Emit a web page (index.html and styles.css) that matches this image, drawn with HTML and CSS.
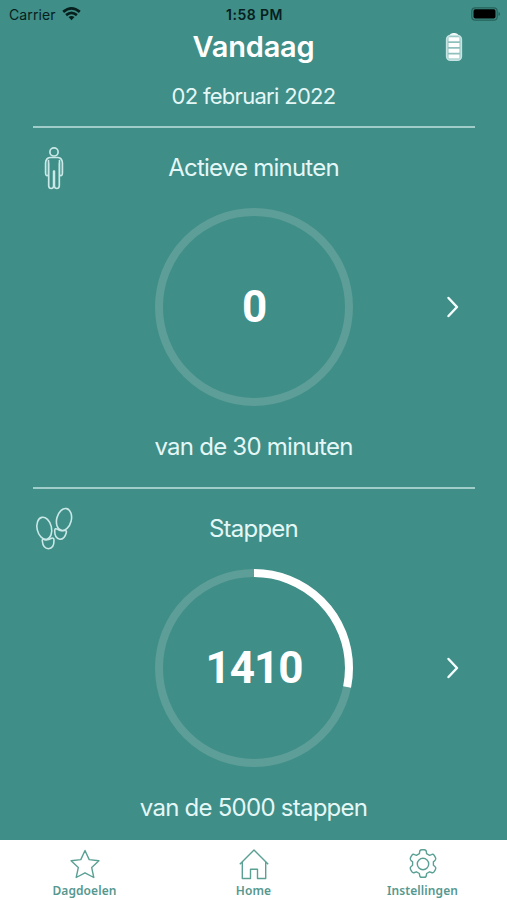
FILE: index.html
```html
<!DOCTYPE html>
<html lang="nl">
<head>
<meta charset="utf-8">
<title>Vandaag</title>
<link rel="stylesheet" href="styles.css">
</head>
<body>
<div class="app">
  <header class="header">
    <div class="status">
      <div class="carrier"><span>Carrier</span>
        <svg class="wifi" width="19" height="14" viewBox="0 0 19 14" fill="none" stroke="#07201e" stroke-width="2.7"><path d="M1.2 4.9Q9.500-2 17.800 4.900M4.100 8.100Q9.500 3.600 14.900 8.100"/><path d="M6.500 10.100Q9.500 7.800 12.500 10.100L9.500 13.200Z" fill="#07201e" stroke="none"/></svg>
      </div>
      <div class="time">1:58 PM</div>
      <svg class="power" width="30" height="14" viewBox="0 0 30 14"><rect x=".8" y=".8" width="25.400" height="12.400" rx="3.500" fill="none" stroke="#27625d" stroke-width="1.200"/><rect x="2.500" y="2.300" width="22" height="9.200" rx="1.800" fill="#000"/><path d="M27.500 5v4q1.600-.7 1.600-2t-1.600-2" fill="#27625d"/></svg>
    </div>
    <div class="title-row">
      <h1>Vandaag</h1>
      <svg class="battery" width="18" height="30" viewBox="0 0 18 30" fill="none"><path d="M4.500 3.500Q5 1 9 1t4.500 2.500" fill="#fff"/><rect x="1.700" y="3.500" width="14.600" height="24.700" rx="3.800" fill="#8fc0bc" stroke="#c5e4e3" stroke-width="1.700"/><path d="M3.500 7.200h11M3.500 13h11M3.500 18.800h11M3.500 24.600h11" stroke="#fff" stroke-width="4"/></svg>
    </div>
    <p class="date">02 februari 2022</p>
  </header>

  <section class="card">
    <div class="card-head">
      <svg class="icon" width="42" height="44" viewBox="0 0 42 44" fill="none" stroke="#c9e8e7" stroke-width="1.700" stroke-linejoin="round" stroke-linecap="round"><circle cx="21" cy="5.900" r="4.100"/><path d="M15.500 14.500V28Q15.300 30 13.500 29.500 12.500 29 12.600 27V17Q12.800 12 17 11.500h8q4.200.5 4.400 5.500v10q.1 2-.9 2.500-1.800.5-2-1.500V14.500M15.700 17v23q.3 2.500 2.500 2.500t2.400-2.500V25h.8v15q.2 2.500 2.400 2.500t2.500-2.500V17"/></svg>
      <h2>Actieve minuten</h2>
    </div>
    <div class="meter">
      <div class="ring">
        <svg viewBox="0 0 198 198"><circle class="track" cx="99" cy="99" r="95"/></svg>
        <strong>0</strong>
      </div>
      <svg class="chevron" width="14" height="24" viewBox="0 0 14 24"><path d="m2.500 3 8.500 9-8.500 9"/></svg>
    </div>
    <p class="goal">van de 30 minuten</p>
  </section>

  <section class="card">
    <div class="card-head">
      <svg class="icon" width="42" height="44" viewBox="0 0 42 44" fill="none" stroke="#c9e8e7" stroke-width="1.600"><ellipse cx="11.300" cy="21.300" rx="7.200" ry="11.200" transform="rotate(-13 11.300 21.300)"/><ellipse cx="31" cy="12.500" rx="7.300" ry="11.200" transform="rotate(14 31 12.500)"/><path d="M9.300 34Q8.800 31.500 11.500 32.700 15 33.300 18.500 31.200 21 30.500 21 33.500 21 41.500 15.500 41.700 10 41.500 9.300 34ZM21.700 23.500Q21.900 20.800 24.500 22.200 28 24.200 31.500 23.500 34.200 23.300 33.200 26 31.500 32.400 26.800 32.200 21.500 31.200 21.700 23.500Z"/></svg>
      <h2>Stappen</h2>
    </div>
    <div class="meter">
      <div class="ring">
        <svg viewBox="0 0 198 198"><circle class="track" cx="99" cy="99" r="95"/><circle class="progress" cx="99" cy="99" r="95" pathLength="5000" stroke-dasharray="1410 5000" transform="rotate(-90 99 99)"/></svg>
        <strong>1410</strong>
      </div>
      <svg class="chevron" width="14" height="24" viewBox="0 0 14 24"><path d="m2.500 3 8.500 9-8.500 9"/></svg>
    </div>
    <p class="goal">van de 5000 stappen</p>
  </section>

  <nav class="tabs">
    <a class="tab"><svg width="32" height="32" viewBox="0 0 32 32"><path d="m16 2.500 4.200 9.100 9.700 1.200-7.200 6.800 2.100 9.900L16 24.800l-8.800 4.700 2.100-9.900-7.200-6.800 9.700-1.200Z"/></svg><span>Dagdoelen</span></a>
    <a class="tab"><svg width="32" height="32" viewBox="0 0 32 32"><path d="M1.800 16.300 16 2l14.200 14.300M4.300 14v16.500h8.200v-9.300h7v9.300h8.200V14"/></svg><span>Home</span></a>
    <a class="tab"><svg width="32" height="32" viewBox="0 0 32 32"><circle cx="16" cy="16" r="5.700"/><path d="M12.600 4q.2-2.200 2.100-2.200h2.600q1.900 0 2.100 2.200l.2 1.600 3 1.700 1.800-.7q1.800-.8 2.800.8l1.300 2.300q.9 1.700-.6 2.900l-1.500 1.200v3.500l1.500 1.200q1.500 1.200.6 2.900l-1.300 2.300q-1 1.600-2.800.8l-1.800-.7-3 1.700-.2 1.600q-.2 2.200-2.100 2.200h-2.600q-1.900 0-2.100-2.200l-.2-1.600-3-1.700-1.800.7q-1.800.8-2.800-.8l-1.300-2.300q-.9-1.700.6-2.900l1.500-1.200v-3.500l-1.500-1.200q-1.500-1.200-.6-2.900l1.300-2.300q1-1.600 2.800-.8l1.800.7 3-1.700Z"/></svg><span>Instellingen</span></a>
  </nav>
</div>
</body>
</html>
```
FILE: styles.css
```css
* { box-sizing: border-box; }
body { margin: 0; background: #3f8e87; }
h1, h2, p { margin: 0; font-weight: 400; }
svg { display: block; flex: none; }
.app {
  display: grid;
  grid-template-rows: 126px 361px 353px 60px;
  height: 900px;
  overflow: hidden;
  color: #e4f7f7;
  font-family: Inter, "Liberation Sans", sans-serif;
}
.header { display: grid; grid-template-rows: 28px 37px 1fr; }
.status {
  display: grid;
  grid-template-columns: 1fr auto 1fr;
  align-items: center;
  padding: 0 6px 0 9px;
  color: #07201e;
}
.carrier { display: flex; align-items: center; gap: 6px; font-size: 14px; letter-spacing: .1px; }
.time { margin-left: -1px; font-size: 14px; font-weight: 600; letter-spacing: .45px; }
.power { justify-self: end; }
.title-row {
  display: grid;
  grid-template-columns: 1fr auto 1fr;
  align-items: center;
  padding: 0 44px;
}
h1 { grid-column: 2; color: #fff; font-size: 29px; font-weight: 600; line-height: 36px; letter-spacing: -.2px; }
.battery { justify-self: end; }
.date { padding-top: 17px; text-align: center; font-size: 22px; line-height: 28px; letter-spacing: -.7px; }
.card {
  display: grid;
  grid-template-rows: 80px 198px 1fr;
  margin: 0 32px 0 33px;
  border-top: 2px solid #a0ccca;
}
.card-head {
  display: grid;
  grid-template-columns: 42px 1fr 42px;
  align-items: start;
  padding-top: 18px;
}
h2 { padding: 6px 1px 0 0; text-align: center; font-size: 24px; line-height: 32px; letter-spacing: -.77px; }
.meter { display: grid; grid-template-columns: 1fr 198px 1fr; align-items: center; }
.ring { grid-column: 2; display: grid; place-items: center; height: 198px; }
.ring > * { grid-area: 1 / 1; }
.ring svg { width: 198px; height: 198px; fill: none; stroke-width: 8; }
.track { stroke: #5d9e98; }
.progress { stroke: #fff; }
.ring strong {
  color: #fff;
  font: bold 44px/48px Roboto, sans-serif;
  letter-spacing: -1px;
}
.chevron {
  justify-self: end;
  margin-right: 15px;
  fill: none;
  stroke: #f3fcfc;
  stroke-width: 2.5;
  stroke-linecap: round;
  stroke-linejoin: round;
}
.goal { padding: 25px 1px 0 0; text-align: center; font-size: 24px; line-height: 32px; letter-spacing: -.75px; }
.tabs { display: grid; grid-template-columns: repeat(3, 1fr); background: #fff; }
.tab {
  display: flex;
  flex-direction: column;
  align-items: center;
  padding-top: 8px;
  color: #56988f;
  font: 600 12px/18px "Noto Sans", sans-serif;
}
.tab svg { fill: none; stroke: #5ba095; stroke-width: 1.4; stroke-linejoin: round; }
.tab span { margin-top: 2px; letter-spacing: .1px; }
```
